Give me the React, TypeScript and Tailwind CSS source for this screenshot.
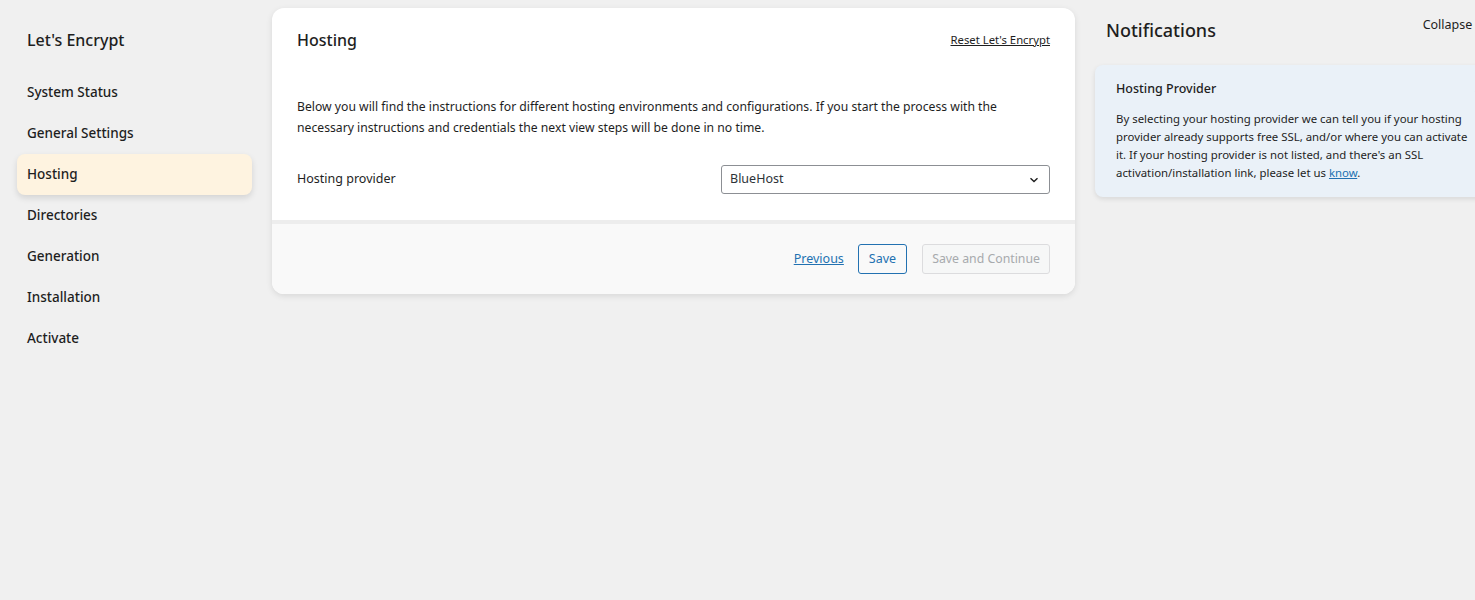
import React from "react";

const menu = ["System Status", "General Settings", "Hosting", "Directories", "Generation", "Installation", "Activate"];

export default function App() {
  return (
    <div
      className="w-[1475px] h-[600px] overflow-hidden bg-[#f0f0f0] text-[#1e1e1e] flex"
      style={{ fontFamily: '"Noto Sans", "Open Sans", sans-serif' }}
    >
      {/* Sidebar */}
      <div className="w-[272px] shrink-0 pl-[17px] pr-[20px]">
        <div className="pl-[10px] pt-[28px] h-[72px] text-[16px] font-medium text-[#1e1e1e]">Let's Encrypt</div>
        <div className="flex flex-col">
          {menu.map((m) => (
            <div
              key={m}
              className={
                "h-[41px] flex items-center px-[10px] text-[13.5px] font-medium rounded-[8px] " +
                (m === "Hosting" ? "bg-[#fef3e0] shadow-[0_3px_6px_rgba(0,0,0,0.12)]" : "")
              }
            >
              {m}
            </div>
          ))}
        </div>
      </div>

      {/* Main card */}
      <div className="w-[803px] shrink-0 pt-[8px]">
        <div className="bg-white rounded-[12px] shadow-[0_2px_6px_rgba(0,0,0,0.1)] overflow-hidden">
          <div className="px-[25px]">
            <div className="h-[64px] flex items-center justify-between">
              <div className="text-[16px] font-medium text-[#1e1e1e]">Hosting</div>
              <a className="text-[11.3px] underline text-[#1e1e1e]">Reset Let's Encrypt</a>
            </div>
            <div className="pt-[24px] text-[12.2px] leading-[21px] text-[#1e1e1e] whitespace-nowrap">
              Below you will find the instructions for different hosting environments and configurations. If you start the process with the
              <br />
              necessary instructions and credentials the next view steps will be done in no time.
            </div>
            <div className="mt-[27px] flex items-center justify-between pb-[26px]">
              <div className="text-[12.5px] text-[#1e1e1e]">Hosting provider</div>
              <div className="w-[329px] h-[29px] border border-[#8c8f94] rounded-[3px] flex items-center justify-between pl-[8px] pr-[10px] text-[12.5px] text-[#2c3338]">
                <span>BlueHost</span>
                <svg width="10" height="6" viewBox="0 0 10 6" fill="none">
                  <path d="M1.5 1.2 L5 4.5 L8.5 1.2" stroke="#1e1e1e" strokeWidth="1.4" />
                </svg>
              </div>
            </div>
          </div>
          <div className="h-[4px] bg-[#ededed]" />
          <div className="h-[70px] bg-[#f9f9f9] flex items-center justify-end px-[25px] gap-[15px]">
            <a className="text-[12.5px] underline text-[#2271b1] mr-[-1px]">Previous</a>
            <div className="h-[30px] px-[10px] flex items-center border border-[#2271b1] rounded-[3px] text-[12.5px] text-[#2271b1] bg-[#f9f9f9]">
              Save
            </div>
            <div className="h-[30px] px-[9px] flex items-center border border-[#dcdcde] rounded-[3px] text-[12.3px] text-[#a7aaad] bg-[#f6f7f7]">
              Save and Continue
            </div>
          </div>
        </div>
      </div>

      {/* Notifications */}
      <div className="w-[420px] shrink-0 pl-[20px]">
        <div className="h-[65px] flex items-start justify-between pl-[11px]">
          <div className="pt-[17px] text-[18px] font-medium text-[#1e1e1e]">Notifications</div>
          <div className="pt-[16px] text-[12.5px] text-[#1e1e1e] whitespace-nowrap pr-[6px]">Collapse all</div>
        </div>
        <div className="w-[400px] bg-[#eaf1f8] rounded-[8px] shadow-[0_2px_5px_rgba(0,0,0,0.1)] pl-[21px] pr-[20px] pt-[14px] pb-[15px]">
          <div className="flex items-center justify-between h-[20px]">
            <div className="text-[12.5px] font-medium text-[#1e1e1e]">Hosting Provider</div>
            <svg width="14" height="9" viewBox="0 0 14 9" fill="none" className="mr-[-13px]">
              <path d="M1.5 7.5 L7 2 L12.5 7.5" stroke="#1e1e1e" strokeWidth="1.6" />
            </svg>
          </div>
          <div className="mt-[11px] text-[11.4px] leading-[18px] text-[#1e1e1e] whitespace-nowrap">
            By selecting your hosting provider we can tell you if your hosting
            <br />
            provider already supports free SSL, and/or where you can activate
            <br />
            it. If your hosting provider is not listed, and there's an SSL
            <br />
            activation/installation link, please let us{" "}
            <a className="underline text-[#2271b1]">know</a>.
          </div>
        </div>
      </div>
    </div>
  );
}
